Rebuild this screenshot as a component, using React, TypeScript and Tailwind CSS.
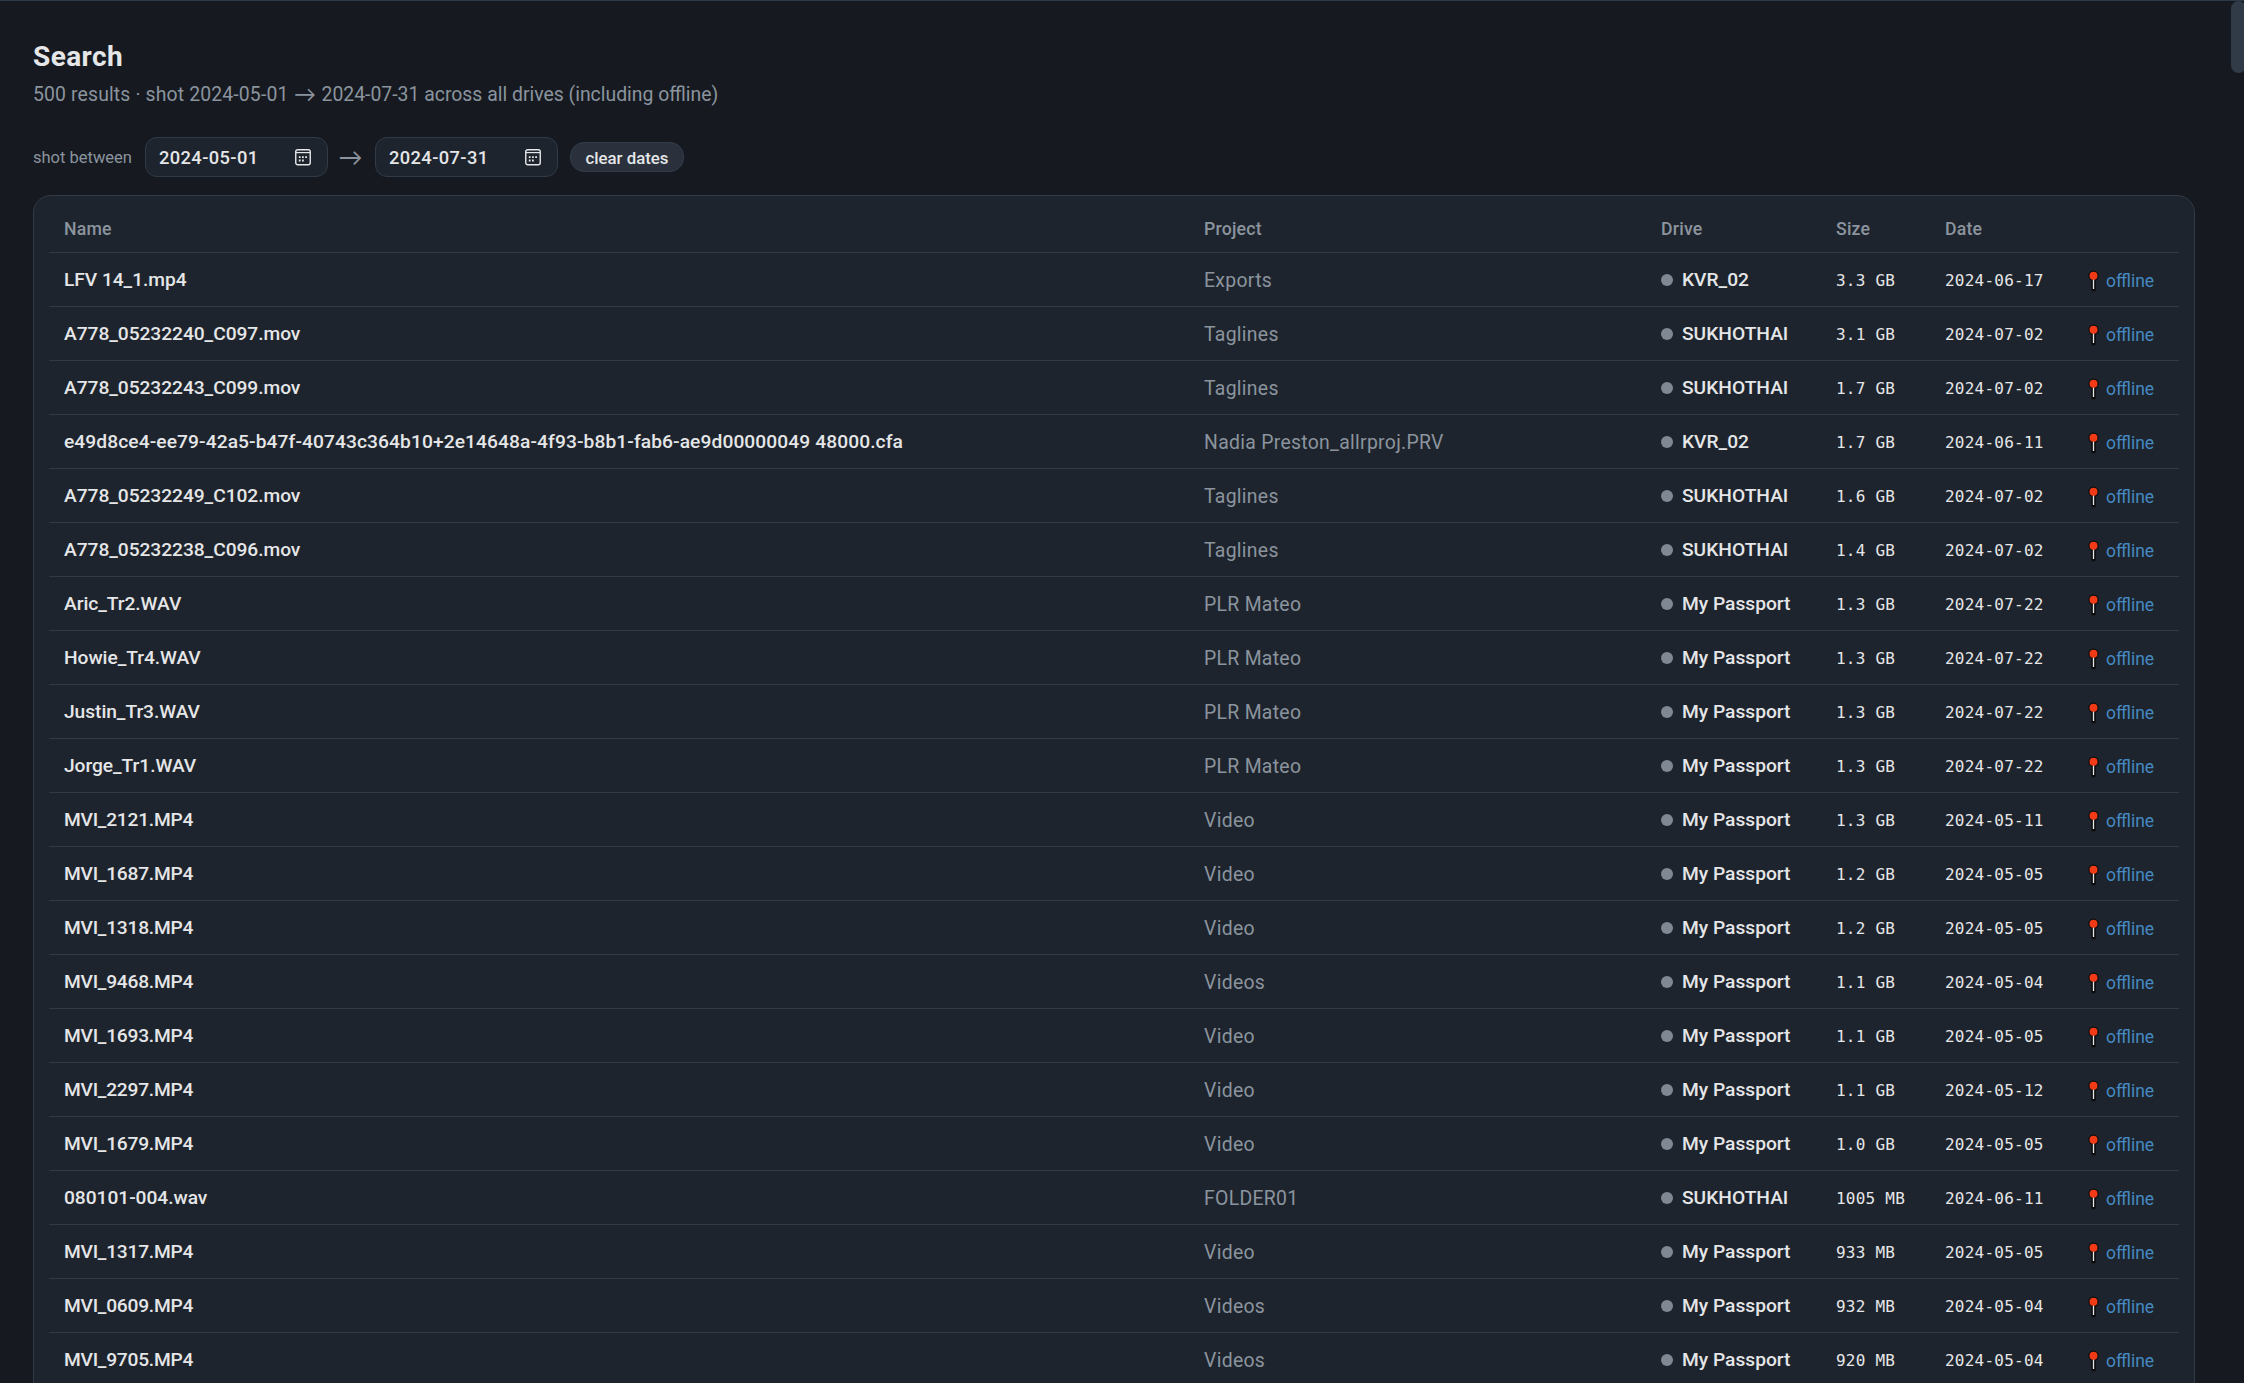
type FileRow = {
  name: string;
  project: string;
  drive: string;
  size: string;
  date: string;
};

const rows: FileRow[] = [
  { name: "LFV 14_1.mp4", project: "Exports", drive: "KVR_02", size: "3.3 GB", date: "2024-06-17" },
  { name: "A778_05232240_C097.mov", project: "Taglines", drive: "SUKHOTHAI", size: "3.1 GB", date: "2024-07-02" },
  { name: "A778_05232243_C099.mov", project: "Taglines", drive: "SUKHOTHAI", size: "1.7 GB", date: "2024-07-02" },
  {
    name: "e49d8ce4-ee79-42a5-b47f-40743c364b10+2e14648a-4f93-b8b1-fab6-ae9d00000049 48000.cfa",
    project: "Nadia Preston_allrproj.PRV",
    drive: "KVR_02",
    size: "1.7 GB",
    date: "2024-06-11",
  },
  { name: "A778_05232249_C102.mov", project: "Taglines", drive: "SUKHOTHAI", size: "1.6 GB", date: "2024-07-02" },
  { name: "A778_05232238_C096.mov", project: "Taglines", drive: "SUKHOTHAI", size: "1.4 GB", date: "2024-07-02" },
  { name: "Aric_Tr2.WAV", project: "PLR Mateo", drive: "My Passport", size: "1.3 GB", date: "2024-07-22" },
  { name: "Howie_Tr4.WAV", project: "PLR Mateo", drive: "My Passport", size: "1.3 GB", date: "2024-07-22" },
  { name: "Justin_Tr3.WAV", project: "PLR Mateo", drive: "My Passport", size: "1.3 GB", date: "2024-07-22" },
  { name: "Jorge_Tr1.WAV", project: "PLR Mateo", drive: "My Passport", size: "1.3 GB", date: "2024-07-22" },
  { name: "MVI_2121.MP4", project: "Video", drive: "My Passport", size: "1.3 GB", date: "2024-05-11" },
  { name: "MVI_1687.MP4", project: "Video", drive: "My Passport", size: "1.2 GB", date: "2024-05-05" },
  { name: "MVI_1318.MP4", project: "Video", drive: "My Passport", size: "1.2 GB", date: "2024-05-05" },
  { name: "MVI_9468.MP4", project: "Videos", drive: "My Passport", size: "1.1 GB", date: "2024-05-04" },
  { name: "MVI_1693.MP4", project: "Video", drive: "My Passport", size: "1.1 GB", date: "2024-05-05" },
  { name: "MVI_2297.MP4", project: "Video", drive: "My Passport", size: "1.1 GB", date: "2024-05-12" },
  { name: "MVI_1679.MP4", project: "Video", drive: "My Passport", size: "1.0 GB", date: "2024-05-05" },
  { name: "080101-004.wav", project: "FOLDER01", drive: "SUKHOTHAI", size: "1005 MB", date: "2024-06-11" },
  { name: "MVI_1317.MP4", project: "Video", drive: "My Passport", size: "933 MB", date: "2024-05-05" },
  { name: "MVI_0609.MP4", project: "Videos", drive: "My Passport", size: "932 MB", date: "2024-05-04" },
  { name: "MVI_9705.MP4", project: "Videos", drive: "My Passport", size: "920 MB", date: "2024-05-04" },
];

const gridCols = "grid grid-cols-[1140px_457px_175px_109px_140px_1fr] pl-[15px]";

export default function App() {
  return (
    <div className="relative h-[1383px] overflow-hidden border-t border-[#2d3946] bg-[#161a20] font-[Roboto,sans-serif] text-[#e5e6e8]">
      <main className="flex flex-col pr-[49px] pl-[33px]">
        <h1 className="mt-9 text-[28px] leading-10 font-bold tracking-[0.4px]">Search</h1>
        <p className="mt-[3px] flex h-[30px] items-center text-[19.4px] whitespace-pre text-[#8b949e]">
          <span className="tracking-[0.14px]">500 results · shot 2024-05-01</span>
          <span className="w-[33px] pb-[3px] text-center font-[Lato,sans-serif] text-[22px]">→</span>
          <span>2024-07-31 across all drives (including offline)</span>
        </p>

        <div className="mt-[27px] flex h-10 items-center">
          <span className="w-28 pt-[3px] text-[16.5px] text-[#8b949e]">shot between</span>
          <DateField value="2024-05-01" />
          <span className="w-[47px] pr-0.5 text-center font-[Lato,sans-serif] text-2xl text-[#8b949e]">→</span>
          <DateField value="2024-07-31" />
          <button
            type="button"
            className="ml-3 h-[30px] w-[114px] rounded-[14px] border border-[#313c49] bg-[#2a313c] pt-0.5 text-[16.8px] leading-none font-medium"
          >
            clear dates
          </button>
        </div>

        <section className="mt-[18px] h-[1300px] rounded-[18px] border border-[#303b47] bg-[#1e242d] px-[15px] pt-[15px]">
          <div className={`${gridCols} h-[42px] items-center border-b border-[#303b47] pb-1 text-[17.7px] font-medium tracking-[0.2px] text-[#8b949e]`}>
            <span>Name</span>
            <span>Project</span>
            <span>Drive</span>
            <span>Size</span>
            <span>Date</span>
          </div>
          {rows.map((row) => (
            <ResultRow key={row.name} row={row} />
          ))}
        </section>
      </main>

      {/* Scrollbar thumb */}
      <div className="absolute top-0 right-[-2px] h-[72px] w-[15px] rounded-full bg-[#313b47]" />
    </div>
  );
}

function nameTracking(name: string) {
  if (name.startsWith("MVI")) return "tracking-[-0.25px]";
  return name.length > 40 ? "tracking-[0.09px]" : "tracking-[-0.05px]";
}

function ResultRow({ row }: { row: FileRow }) {
  return (
    <div className={`${gridCols} h-[54px] items-center border-b border-[#303b47] pt-0.5 text-[19.2px]`}>
      <span className={`font-medium ${nameTracking(row.name)}`}>{row.name}</span>
      <span className="text-[19.4px] tracking-[0.3px] text-[#8b949e]">{row.project}</span>
      <span className="flex items-center font-medium">
        <i className="mr-[9px] size-3 rounded-full bg-[#7f8893]" />
        {row.drive}
      </span>
      <span className="font-['DejaVu_Sans_Mono',monospace] text-base tracking-[0.23px]">{row.size}</span>
      <span className="font-['DejaVu_Sans_Mono',monospace] text-base tracking-[0.23px]">{row.date}</span>
      <a className="flex items-center pl-[3px] text-[17.5px] text-[#4589c2]">
        <PinIcon />
        <span className="pt-0.5">offline</span>
      </a>
    </div>
  );
}

function DateField({ value }: { value: string }) {
  return (
    <div className="flex h-10 w-[183px] items-center justify-between rounded-xl border border-[#303b47] bg-[#1e242d] pr-4 pl-[13px] text-[18.3px] font-medium tracking-[0.4px]">
      <span className="pt-0.5">{value}</span>
      <svg aria-hidden="true" className="h-[17px] w-4" viewBox="0 0 16 17" fill="none">
        <rect x="0.75" y="0.75" width="14.5" height="15" rx="2" stroke="#e5e6e8" strokeWidth="1.4" />
        <path d="M1 3.6h14" stroke="#e5e6e8" strokeWidth="1.2" />
        <path
          d="M7 7.2h1.8v1.8H7zM10.2 7.2H12v1.8h-1.8zM3.8 7.2h1.8v1.8H3.8zM3.8 10.6h1.8v1.8H3.8zM7 10.6h1.8v1.8H7z"
          fill="#e5e6e8"
        />
      </svg>
    </div>
  );
}

function PinIcon() {
  return (
    <svg aria-hidden="true" className="mr-[7px] h-[22px] w-[11px]" viewBox="0 0 11 22">
      <rect x="3.2" y="8" width="4.6" height="13.4" rx="2" fill="#0b0c0e" />
      <circle cx="5.5" cy="5.8" r="5.2" fill="#0b0c0e" />
      <path d="M5.5 9v10" stroke="#e9e9ea" strokeWidth="1.3" />
      <circle cx="5.5" cy="5.8" r="4" fill="#f23a17" />
    </svg>
  );
}
